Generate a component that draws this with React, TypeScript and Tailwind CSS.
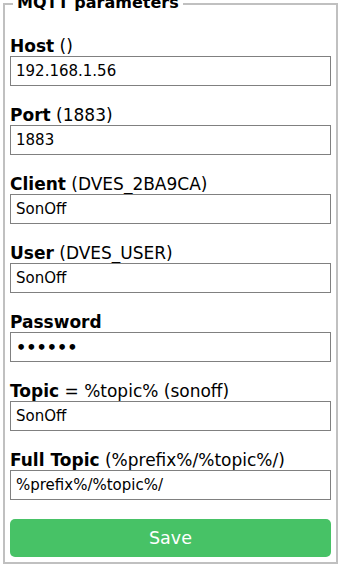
import React from "react";

const font = { fontFamily: '"DejaVu Sans", sans-serif' };

type Row = { bold: string; rest: string; value: string; type?: string };

const rows: Row[] = [
  { bold: "Host", rest: " ()", value: "192.168.1.56" },
  { bold: "Port", rest: " (1883)", value: "1883" },
  { bold: "Client", rest: " (DVES_2BA9CA)", value: "SonOff" },
  { bold: "User", rest: " (DVES_USER)", value: "SonOff" },
  { bold: "Password", rest: "", value: "sonoff", type: "password" },
  { bold: "Topic", rest: " = %topic% (sonoff)", value: "SonOff" },
  { bold: "Full Topic", rest: " (%prefix%/%topic%/)", value: "%prefix%/%topic%/" },
];

export default function App() {
  return (
    <div
      className="w-[341px] h-[568px] bg-white overflow-hidden pt-[3px] px-[3px] text-black"
      style={font}
    >
      <div className="relative border-2 border-[#c0c0c0] px-[5px] pt-[31px] pb-[5px] flex flex-col gap-[19px]">
        <span className="absolute top-[-12px] left-[8px] px-1 bg-white font-bold text-[16px] leading-[20px] whitespace-nowrap">
          MQTT parameters
        </span>
        {rows.map((r) => (
          <div key={r.bold} className="flex flex-col">
            <div className="h-[20px] leading-[20px] text-[17px] whitespace-nowrap">
              <b>{r.bold}</b>
              {r.rest}
            </div>
            {r.type === "password" ? (
              <input
                readOnly
                type="password"
                value={r.value}
                className="h-[30px] w-full border border-[#808080] px-[5px] text-[16px] font-bold text-black bg-white outline-none"
                style={font}
              />
            ) : (
              <input
                readOnly
                type="text"
                value={r.value}
                className="h-[30px] w-full border border-[#808080] px-[5px] text-[15px] text-black bg-white outline-none"
                style={font}
              />
            )}
          </div>
        ))}
        <button
          className="h-[38px] w-full rounded-[5px] bg-[#47c266] text-white text-[17.5px] leading-[38px]"
          style={font}
        >
          Save
        </button>
      </div>
    </div>
  );
}
